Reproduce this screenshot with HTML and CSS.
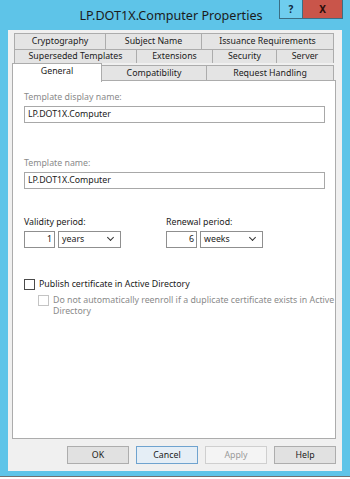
FILE: index.html
```html
<!DOCTYPE html>
<html lang="en">
<head>
  <meta charset="UTF-8" />
  <title>LP.DOT1X.Computer Properties</title>
  <link rel="stylesheet" href="styles.css">
</head>
<body>

<div class="window">
  <div class="titlebar">
    <div class="title">LP.DOT1X.Computer Properties</div>
    <div class="caption-btn help-btn">?</div>
    <div class="caption-btn close-btn">X</div>
  </div>

  <div class="client">
    <div class="tabs">
      <div class="tab-row row1">
        <div class="tab">Cryptography</div>
        <div class="tab">Subject Name</div>
        <div class="tab">Issuance Requirements</div>
      </div>
      <div class="tab-row row2">
        <div class="tab">Superseded Templates</div>
        <div class="tab">Extensions</div>
        <div class="tab">Security</div>
        <div class="tab">Server</div>
      </div>
      <div class="tab-row row3">
        <div class="tab active">General</div>
        <div class="tab">Compatibility</div>
        <div class="tab">Request Handling</div>
      </div>
    </div>

    <div class="panel">
      <div class="field">
        <div class="label disabled">Template display name:</div>
        <div class="textbox">LP.DOT1X.Computer</div>
      </div>
      <div class="field second">
        <div class="label disabled">Template name:</div>
        <div class="textbox">LP.DOT1X.Computer</div>
      </div>

      <div class="periods">
        <div class="period">
          <div class="label">Validity period:</div>
          <div class="period-inputs">
            <div class="num">1</div>
            <div class="combo">years <span class="arrow"></span></div>
          </div>
        </div>
        <div class="period">
          <div class="label">Renewal period:</div>
          <div class="period-inputs">
            <div class="num">6</div>
            <div class="combo">weeks <span class="arrow"></span></div>
          </div>
        </div>
      </div>

      <div class="check">
        <span class="box"></span>
        <span>Publish certificate in Active Directory</span>
      </div>
      <div class="check sub disabled">
        <span class="box"></span>
        <span>Do not automatically reenroll if a duplicate certificate exists in Active<br>Directory</span>
      </div>
    </div>

    <div class="buttons">
      <div class="btn">OK</div>
      <div class="btn focused">Cancel</div>
      <div class="btn disabled-btn">Apply</div>
      <div class="btn">Help</div>
    </div>
  </div>
</div>

</body>
</html>
```

FILE: styles.css
```css
body {
  margin: 0;
  background-color: #ffffff;
  font-family: 'Noto Sans', 'Open Sans', sans-serif;
  font-size: 8.8px;
  color: #1a1a1a;
}
.window {
  width: 350px;
  height: 477px;
  box-sizing: border-box;
  background-color: #5ec4e8;
  border-bottom: 1px solid #707070;
  padding: 0 8px 5px 8px;
  display: flex;
  flex-direction: column;
}
.titlebar {
  height: 30px;
  display: flex;
  align-items: flex-start;
  margin-right: -1px;
}
.title {
  flex: 1;
  padding-left: 55px;
  text-align: center;
  font-size: 12.6px;
  line-height: 31px;
  white-space: nowrap;
  color: #1b1b1b;
}
.caption-btn {
  height: 18px;
  line-height: 18px;
  text-align: center;
  font-weight: bold;
  font-size: 10px;
  border: 1px solid #3b6e84;
  border-top: none;
}
.help-btn {
  width: 22px;
  background-color: #6fcdee;
  color: #10253a;
}
.close-btn {
  width: 39px;
  background-color: #c9554a;
  color: #2b0e0a;
  border-left: none;
}
.client {
  flex: 1;
  background-color: #f0f0f0;
  padding: 3px 6px 0 4px;
  display: flex;
  flex-direction: column;
}
.tabs {
  display: flex;
  flex-direction: column;
}
.tab-row {
  display: grid;
  height: 16px;
}
.row1 {
  margin-left: 2px;
  grid-template-columns: 92px 96px 132px;
}
.row2 {
  margin-left: 2px;
  height: 14px;
  grid-template-columns: 123px 76px 64px 57px;
}
.row3 {
  height: 17px;
  grid-template-columns: 90px 105px 127px;
  align-items: end;
}
.tab {
  background-color: #e4e4e4;
  border: 1px solid #acacac;
  border-bottom: none;
  text-align: center;
  line-height: 14px;
  margin-left: -1px;
  white-space: nowrap;
  overflow: hidden;
}
.row1 .tab:first-child,
.row2 .tab:first-child {
  margin-left: 0;
}
.row2 .tab {
  line-height: 13px;
}
.row3 .tab {
  height: 15px;
}
.row3 .tab.active {
  position: relative;
  z-index: 1;
  height: 18px;
  margin-left: 0;
  margin-bottom: -1px;
  line-height: 15px;
  background-color: #ffffff;
}
.panel {
  height: 359px;
  box-sizing: border-box;
  background-color: #ffffff;
  border: 1px solid #acacac;
  padding: 10px 10px 0 11px;
}
.label {
  line-height: 13px;
}
.disabled {
  color: #8a8a8a;
}
.textbox {
  margin-top: 2px;
  height: 15px;
  border: 1px solid #a8a8a8;
  padding-left: 3px;
  line-height: 15px;
  color: #1a1a1a;
}
.field.second {
  margin-top: 34px;
}
.periods {
  margin-top: 27px;
  display: flex;
}
.period {
  width: 142px;
}
.period-inputs {
  margin-top: 2px;
  display: flex;
  gap: 3px;
}
.num {
  width: 27px;
  height: 15px;
  border: 1px solid #8f8f8f;
  text-align: right;
  padding-right: 2px;
  line-height: 15px;
}
.combo {
  width: 58px;
  height: 15px;
  border: 1px solid #8f8f8f;
  padding-left: 3px;
  line-height: 15px;
  position: relative;
}
.arrow {
  position: absolute;
  right: 7px;
  top: 3px;
  width: 4px;
  height: 4px;
  border-right: 1.5px solid #333;
  border-bottom: 1.5px solid #333;
  transform: rotate(45deg);
}
.check {
  display: flex;
  align-items: flex-start;
  gap: 4px;
  line-height: 11px;
}
.periods + .check {
  margin-top: 31px;
}
.check .box {
  flex: none;
  width: 9px;
  height: 9px;
  border: 1px solid #4a4a4a;
  background-color: #fff;
}
.check.sub {
  margin-top: 5px;
  padding-left: 14px;
  margin-right: -12px;
  white-space: nowrap;
}
.check.sub .box {
  border-color: #c4c4c4;
}
.buttons {
  margin-top: 7px;
  display: flex;
  justify-content: flex-end;
  gap: 7px;
}
.btn {
  width: 60px;
  height: 16px;
  line-height: 16px;
  text-align: center;
  background-color: #e1e1e1;
  border: 1px solid #adadad;
}
.btn.focused {
  background-color: #e5eef6;
  border-color: #6fa3cf;
}
.btn.disabled-btn {
  background-color: #f4f4f4;
  border-color: #cfcfcf;
  color: #9a9a9a;
}
```
